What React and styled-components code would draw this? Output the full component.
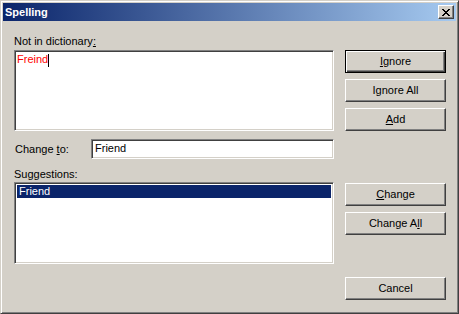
import styled, { createGlobalStyle } from "styled-components";

const Global = createGlobalStyle`
  html, body {
    margin: 0;
    padding: 0;
    background: #d4d0c8;
    overflow: hidden;
  }
  * {
    box-sizing: border-box;
  }
`;

// 바깥 창 테두리 (win2k classic)
const Window = styled.div`
  width: 459px;
  height: 314px;
  background: #d4d0c8;
  border: 1px solid;
  border-color: #d4d0c8 #404040 #404040 #d4d0c8;
  box-shadow: inset 1px 1px #ffffff, inset -1px -1px #808080;
  padding: 2px;
  display: flex;
  flex-direction: column;
  font-family: "Liberation Sans", Arial, sans-serif;
  font-size: 11px;
  line-height: 13px;
  color: #000;
`;

const TitleBar = styled.div`
  height: 18px;
  flex: none;
  display: flex;
  align-items: center;
  justify-content: space-between;
  padding: 0 2px 0 2px;
  background: linear-gradient(to right, #0a246a, #a6caf0);
`;

const Title = styled.span`
  color: #fff;
  font-weight: bold;
  padding-left: 0;
  padding-top: 1px;
`;

const CloseBtn = styled.div`
  width: 16px;
  height: 14px;
  display: flex;
  align-items: center;
  justify-content: center;
  background: #d4d0c8;
  border: 1px solid;
  border-color: #fff #404040 #404040 #fff;
  box-shadow: inset -1px -1px #808080;
`;

const Body = styled.div`
  flex: 1;
  display: flex;
  gap: 11px;
  padding: 14px 0 0 11px;
`;

const LeftCol = styled.div`
  width: 320px;
  display: flex;
  flex-direction: column;
`;

const RightCol = styled.div`
  width: 101px;
  display: flex;
  flex-direction: column;
  padding-top: 15px;
`;

const Label = styled.div`
  height: 13px;
  margin-bottom: ${(p) => p.$gap || 0}px;
  white-space: nowrap;
  u {
    text-decoration: underline;
    text-underline-offset: 1px;
  }
`;

const Sunken = styled.div`
  background: #fff;
  border: 1px solid;
  border-color: #808080 #ffffff #ffffff #808080;
  box-shadow: inset 1px 1px #404040, inset -1px -1px #d4d0c8;
`;

const WordBox = styled(Sunken)`
  height: 81px;
  padding: 2px 2px;
  color: #ff0000;
`;

const Caret = styled.span`
  display: inline-block;
  width: 1px;
  height: 13px;
  background: #000;
  vertical-align: top;
  margin-top: 1px;
`;

const ChangeRow = styled.div`
  display: flex;
  align-items: center;
  margin-top: 8px;
  margin-bottom: 9px;
`;

const ChangeLabel = styled(Label)`
  width: 77px;
  padding-left: 1px;
  margin-top: 1px;
`;

const ChangeInput = styled(Sunken)`
  flex: 1;
  height: 20px;
  padding: 2px 3px;
`;

const ListBox = styled(Sunken)`
  height: 82px;
  padding: 2px;
  margin-top: 1px;
`;

const ListItem = styled.div`
  height: 13px;
  padding-left: 2px;
  background: ${(p) => (p.$selected ? "#0a246a" : "transparent")};
  color: ${(p) => (p.$selected ? "#fff" : "#000")};
`;

const Btn = styled.div`
  height: 23px;
  display: flex;
  align-items: center;
  justify-content: center;
  margin-top: ${(p) => p.$top || 0}px;
  background: #d4d0c8;
  border: 1px solid;
  border-color: ${(p) =>
    p.$default ? "#000 #000 #000 #000" : "#fff #404040 #404040 #fff"};
  box-shadow: ${(p) =>
    p.$default
      ? "inset 1px 1px #fff, inset -1px -1px #404040, inset -2px -2px #808080"
      : "inset -1px -1px #808080"};
  u {
    text-decoration: underline;
    text-underline-offset: 1px;
  }
`;

function App() {
  return (
    <>
      <Global />
      <Window>
        <TitleBar>
          <Title>Spelling</Title>
          <CloseBtn>
            <svg width="8" height="7" viewBox="0 0 8 7">
              <path
                d="M0 0h2v1h1v1h2V1h1V0h2v1H7v1H6v1H5v1h1v1h1v1h1v1H6V6H5V5H3v1H2v1H0V6h1V5h1V4h1V3H2V2H1V1H0z"
                fill="#000"
              />
            </svg>
          </CloseBtn>
        </TitleBar>
        <Body>
          <LeftCol>
            <Label $gap={2}>
              Not in dictionary<u>:</u>
            </Label>
            <WordBox>
              Freind
              <Caret />
            </WordBox>
            <ChangeRow>
              <ChangeLabel>
                Change <u>t</u>o:
              </ChangeLabel>
              <ChangeInput>Friend</ChangeInput>
            </ChangeRow>
            <Label>
              Sug<u>g</u>estions:
            </Label>
            <ListBox>
              <ListItem $selected>Friend</ListItem>
            </ListBox>
          </LeftCol>
          <RightCol>
            <Btn $default>
              <span>
                <u>I</u>gnore
              </span>
            </Btn>
            <Btn $top={6}>Ignore All</Btn>
            <Btn $top={6}>
              <span>
                <u>A</u>dd
              </span>
            </Btn>
            <Btn $top={52}>
              <span>
                <u>C</u>hange
              </span>
            </Btn>
            <Btn $top={6}>
              <span>
                Change A<u>l</u>l
              </span>
            </Btn>
            <Btn $top={42}>Cancel</Btn>
          </RightCol>
        </Body>
      </Window>
    </>
  );
}

export default App;
